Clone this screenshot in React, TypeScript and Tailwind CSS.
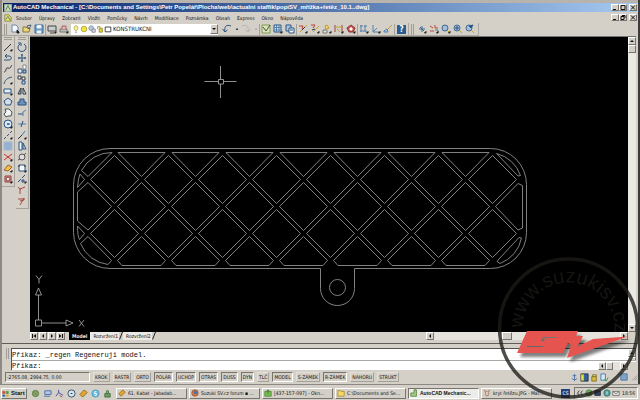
import type { ReactNode } from "react";

type Stroke = [d: string, color: string, fill?: string];

const navy = "#2b5280";
const ink = "#333840";
const red = "#b8403a";
const gold = "#c89a28";

function Glyph({ parts, className = "size-[10px]" }: { parts: Stroke[]; className?: string }) {
  return (
    <svg viewBox="0 0 10 10" className={`${className} shrink-0`} aria-hidden="true">
      {parts.map(([d, color, fill], i) => (
        <path key={i} d={d} stroke={color} fill={fill ?? "none"} strokeWidth="1" />
      ))}
    </svg>
  );
}

const corner: Stroke = ["M9 7.5V9H7.5Z", "#222", "#222"];
const lens: Stroke[] = [["M1 4a3 3 0 1 1 6 0a3 3 0 1 1-6 0Z", "#42688f", "#9fc0dc"], ["M6 6L9 9", gold]];

const icons: Record<string, Stroke[]> = {
  New: [["M2 1H6L8 3V8H2Z", "#6c88a5", "#f4f8fb"], ["M7 6L9 8V9H7Z", "#222", "#222"]],
  Open: [["M1 8V3H4L5 4H8L7 8Z", "#8b7a35", "#ecd278"], ["M5 2L9 1L7 5Z", "#456", "#e8eef2"]],
  Save: [["M1 1H9V9H1Z", "#3f6a99", "#6f9bc7"], ["M3 1.5H7V4H3Z", "#dce8f2", "#fff"], ["M3 7H7V9H3Z", "#e0e8f0", "#fff"]],
  Plot: [["M1 2H9V7H1Z", "#444", "#c9cdd0"], ["M3 9H7", "#444"], corner],
  Print: [["M1 5H8V8H1Z", "#777", "#bbb"], ["M3 5V2H7V5", "#a66", "#e9b3aa"], corner],
  Undo: [["M9 2C4 0 2 3 3 8M0.500 5L3 8L5.500 6", navy]],
  "Undo list": [["M4 5H6L5 6Z", "#345", "#345"]],
  Redo: [["M1 2C6 0 8 3 7 8M4.500 6L7 8L9.500 5", "#b5b5b5"]],
  "Redo list": [["M4 5H6L5 6Z", "#aaa", "#aaa"]],
  Sketch: [["M1 1V9H9V1Z", "#7f9c50", "#dce3bb"], ["M2 3L5 7L9 1", "#354"]],
  Table: [["M1 1H8V8H1Z", navy, "#d5e4f0"], ["M1 3.500H8M1 6H8M3.500 1V8M6 1V8", "#5480aa"], corner],
  List: [["M1 1H6V7H1Z", navy, "#aac9e2"], ["M4 4H9V9H4Z", navy, "#f2f6fa"], ["M5 6H8", navy]],
  "Edit part": [["M1 2H5L4 5", red], ["M2 8L6 4L9 1", gold], ["M4 6L7 3", ink], corner],
  "Power edit": [["M1 1H5L3 4", red], ["M3 8L9 2", gold], ["M2 6L5 5", ink], corner],
  Parts: [["M3 2L5 1L7 4L4 5Z", gold, "#f1d57b"], ["M1 6H5V9H1Z", "#777", "#ddd"], corner],
  Dimension: [["M1 1V8M8 1V8", "#944"], ["M1 3H8M3 5L6 8", gold], corner],
  Assembly: [["M1 4L5 1L9 4L7 8H3Z", "#8c2f2a", "#c9554d"], ["M4 4H6V6H4Z", "#fff", "#fff"], corner],
  Columns: [["M2 1V8M6 1V8M1 2H4M5 2H8M1 7H8", "#5480aa"], corner],
  Axis: [["M2 1V8H8M2 8L6 4", "#5480aa"], corner],
  Brush: [["M9 1L4 6", gold], ["M1 7L4 5L5 8H1Z", "#5480aa", "#b7cfe4"]],
  Pan: [["M2 5H8M5 2V8M3 3L7 7", "#42688f"], corner],
  "Zoom window": [["M1 2L4 4M1 7H5M6 1V4H9", "#b5483f"], ["M6 6H9V9", "#5b7fa3"], corner],
  "Zoom realtime": [...lens, corner],
  "Zoom extents": [...lens, ["M2 4H6M4 2V6", navy]],
  "Zoom previous": [...lens, ["M8 1L4 2L6 4Z", navy, navy]],
  Line: [["M1 9L8 2", ink], corner],
  Polyline: [["M1 7H6C9 7 9 3 6 3H2M4 1L2 3L4 5", navy]],
  Spline: [["M1 8C4 8 2 3 5 4S7 3 9 1", ink]],
  Arc: [["M1 9C2 5 4 3 9 2", navy], corner],
  Rectangle: [["M1 3H8V7H1Z", navy, "#e7f0f7"], corner],
  Polygon: [["M5 1L9 4L7.500 8H2.500L1 4Z", navy, "#d5dee6"]],
  Cloud: [["M2 1H6L9 4L8 8H5L3 9L1 6L3 4Z", "#455", "#f4f4f4"]],
  Circle: [["M1 5a4 4 0 1 1 8 0a4 4 0 1 1-8 0Z", navy, "#dce9f2"], ["M4 5H7M5 4V6", navy], corner],
  Centerline: [["M1 9L3 7M4 6L6 4M7 3L9 1", navy], corner],
  Hatch: [["M1 1H9V9H1Z", "#9db5d0", "#c8d6e6"], ["M1 3H9M1 5H9M1 7H9M3 1V9M5 1V9M7 1V9", "#86a5c8"]],
  Erase: [["M1 2L9 8M1 8L9 2", "#c8322f"], corner],
  Eraser: [["M1 7L5 2L9 4L5 8Z", "#a65f2a", "#ecc24a"], corner],
  Region: [["M2 2H8V8H2Z", "#9b3d3a", "#d9b8b2"], ["M3 5a2 2 0 1 1 4 0a2 2 0 1 1-4 0Z", "#833", "#eee"], corner],
  Rotate: [["M3 2A4 4 0 1 0 7 2M1 1H4V4", navy]],
  Move: [["M5 1V9M1 5H9M4 2H6M4 8H6M2 4V6M8 4V6", navy]],
  Copy: [["M1 5H5V9H1Z", "#456", "#dce9f2"], ["M6 1H9V5H6Z", "#888", "#fff"], ["M6 6H9V9H6Z", navy, "#98b7d2"]],
  Array: [["M1 1H4V4H1ZM5 2H8V5H5Z", ink, "#e9eef2"], ["M5 6H8V9H5Z", navy, "#c2d5e5"]],
  Mirror: [["M4 2V8H1Z", ink, "#98b7d2"], ["M6 2V8H9Z", ink, "#e4ecf2"]],
  Offset: [["M1 8V5H3V2H7V5H9V8Z", navy, "#6d94b8"]],
  Trim: [["M1 6H6", navy], ["M6 8V4L9 2", "#5480aa"]],
  Extend: [["M1 5H9", "#5480aa"], ["M4 8L6 2", navy]],
  Lengthen: [["M1 9L5 5", ink], ["M5 5L8 1", "#3c78b4"], corner],
  Chamfer: [["M2 1H5V9H2Z", navy, "#eef4f8"], ["M6 2L9 8H6Z", navy, "#d0dfea"]],
  Hole: [["M2 5a3 3 0 1 1 6 0a3 3 0 1 1-6 0Z", "#555", "#dedede"], ["M1 8L3 7M7 3L9 1", "#555"]],
  Stretch: [["M2 2H8V8H2Z", navy, "#f4f8fb"], ["M1 3H3M7 3H9", ink], corner],
  Break: [["M1 8L4 5M5 4L8 1", navy], ["M5 6H7V8H5Z", navy], corner],
  Fillet: [["M3 9V4L8 2M1 2L4 5", "#a54a40"]],
  "Fillet edge": [["M3 9L7 2M1 3H8M3 5L7 4", "#a54a40"]],
};

function Tool({ name }: { name: string }) {
  return (
    <button type="button" aria-label={name} className="flex h-[11px] w-[12px] shrink-0 items-center justify-center">
      <Glyph parts={icons[name]} />
    </button>
  );
}

function Separator() {
  return <span className="h-[11px] w-px shrink-0 bg-[#a5a29c]" />;
}

function Grip({ vertical = false }: { vertical?: boolean }) {
  return vertical ? (
    <span className="mx-[2px] my-px h-[3px] shrink-0 border-y border-[#a09d97]" />
  ) : (
    <span className="mx-[2px] h-[11px] w-[3px] shrink-0 border-x border-[#a09d97]" />
  );
}

const raised = "border border-t-white border-l-white border-r-[#77746f] border-b-[#77746f] bg-[#d4d0c8]";
const sunken = "border border-t-[#77746f] border-l-[#77746f] border-r-white border-b-white";

function Caption({ label, d }: { label: string; d: string }) {
  return (
    <button type="button" aria-label={label} className={`flex h-[7px] w-[8px] items-center justify-center ${raised}`}>
      <svg viewBox="0 0 6 5" className="h-[5px] w-[6px]" aria-hidden="true">
        <path d={d} stroke="#111" fill="none" strokeWidth="1" />
      </svg>
    </button>
  );
}

function Captions({ middle }: { middle: string }) {
  return (
    <div className="ml-auto flex shrink-0 items-center">
      <Caption label="Minimalizovat" d="M1 4.500H4" />
      <Caption label="Obnovit" d={middle} />
      <span className="w-[2px]" />
      <Caption label="Zavřít" d="M1 0.500L5 4.500M5 0.500L1 4.500" />
    </div>
  );
}

function Arrow({ label, d }: { label: string; d: string }) {
  return (
    <button type="button" aria-label={label} className={`flex size-[8px] shrink-0 items-center justify-center ${raised}`}>
      <svg viewBox="0 0 6 6" className="size-[6px]" aria-hidden="true">
        <path d={d} fill="#111" />
      </svg>
    </button>
  );
}

const left = "M4 1V5L2 3Z";
const right = "M2 1V5L4 3Z";
const up = "M1 4H5L3 2Z";
const down = "M1 2H5L3 4Z";

const menus = ["Soubor", "Úpravy", "Zobrazit", "Vložit", "Pomůcky", "Návrh", "Modifikace", "Poznámka", "Obsah", "Express", "Okno", "Nápověda"];

const layerIcons: Stroke[][] = [
  [["M5 1a2.500 2.500 0 0 1 2 4L6 7H4L3 5A2.500 2.500 0 0 1 5 1Z", "#b5a64c", "#fbf3a4"], ["M4 9H6", "#666"]],
  [["M1.500 5a3.500 3.500 0 1 1 7 0a3.500 3.500 0 1 1-7 0Z", "#a79a25", "#f1e443"]],
  [["M1 4a3 3 0 1 1 6 0a3 3 0 1 1-6 0Z", "#7890a5", "#bccbd6"], ["M5 5H9V9H5Z", "#778", "#dde"]],
  [["M2 5V2H5V4", "#968b2a"], ["M4 4H8V9H4Z", "#968b2a", "#d9cf3f"]],
  [["M1.500 2.500H8.500V8.500H1.500Z", "#222", "#fff"]],
];

function Toolbar() {
  return (
    <div className="flex h-[13px] shrink-0 items-center">
      <div className="flex h-[13px] items-center border-r border-b border-[#aaa7a1]">
        <Grip />
        {["New", "Open", "Save"].map((n) => <Tool key={n} name={n} />)}
        <Separator />
        {["Plot", "Print"].map((n) => <Tool key={n} name={n} />)}
        <label className="relative ml-px flex h-[11px] w-[147px] items-center bg-white">
          <span className="absolute left-px flex">
            {layerIcons.map((parts, i) => (
              <Glyph key={i} parts={parts} className="size-[8px]" />
            ))}
          </span>
          <select aria-label="Vrstva" className="h-[11px] w-full appearance-none bg-transparent pl-[42px] text-[6px] leading-[10px]">
            <option>KONSTRUKCNI</option>
          </select>
          <span className={`pointer-events-none absolute right-0 flex h-[10px] w-[8px] items-center justify-center ${raised}`}>
            <svg viewBox="0 0 6 6" className="size-[6px]" aria-hidden="true"><path d={down} fill="#111" /></svg>
          </span>
        </label>
        <span className="w-[3px]" />
        <Tool name="Undo" />
        <span className="flex w-[7px] justify-center"><Tool name="Undo list" /></span>
        <Tool name="Redo" />
        <span className="flex w-[7px] justify-center"><Tool name="Redo list" /></span>
        <Separator />
        {["Sketch", "Table", "List"].map((n) => <Tool key={n} name={n} />)}
        <Separator />
        {["Edit part", "Power edit", "Parts", "Dimension", "Assembly"].map((n) => <Tool key={n} name={n} />)}
        <Separator />
        {["Columns", "Axis", "Brush"].map((n) => <Tool key={n} name={n} />)}
        <Separator />
        <button type="button" aria-label="Help" className="mx-[2px] flex h-[9px] w-[9px] items-center justify-center bg-[#2c5c8f] text-[8px] leading-[9px] font-bold text-white">?</button>
      </div>
      <div className="flex h-[13px] items-center border-r border-b border-[#aaa7a1] pr-[2px]">
        <Grip />
        {["Pan", "Zoom window", "Zoom realtime", "Zoom extents", "Zoom previous"].map((n) => <Tool key={n} name={n} />)}
      </div>
    </div>
  );
}

const drawTools = ["Line", "Polyline", "Spline", "Arc", "Rectangle", "Polygon", "Cloud", "Circle", "Centerline", "Hatch", "Erase", "Eraser", "Region"];
const modifyTools = ["Rotate", "Move", "Copy", "Array", "Mirror", "Offset", "Trim", "Extend", "Lengthen", "Chamfer", "Hole", "Stretch", "Break", "Fillet", "Fillet edge"];

function SideBar({ tools }: { tools: string[] }) {
  return (
    <div className="flex flex-col self-start border-r border-b border-[#a5a29c] pb-[2px]">
      <Grip vertical />
      {tools.map((n) => <Tool key={n} name={n} />)}
    </div>
  );
}

const diamond = (x: number, y: number) => `M${x} ${y - 24}L${x + 24} ${y}L${x} ${y + 24}L${x - 24} ${y}Z`;
const steps = (n: number) => Array.from({ length: n }, (_, i) => i * 54);

const lattice = [
  ...steps(8).map((s) => diamond(114.5 + s, 179.5)),
  ...steps(7).map((s) => diamond(141.5 + s, 206.5)),
  ...steps(8).map((s) => diamond(114.5 + s, 233.5)),
  ...steps(7).map((s) => `M${118 + s} 152.500H${165 + s}L${141.5 + s} 176.500Z`),
  ...steps(7).map((s) => `M${141.5 + s} 236.500L${165.5 + s} 260.500L${161 + s} 265.500H${122 + s}L${117.5 + s} 260.500Z`),
  "M112 152.500L88 176.500L81.500 170.500A34 34 0 0 1 112 152.500Z",
  "M84.500 179.500L80 174Q78 179 77.500 187.500Z",
  "M88 182.500L111.500 206.500L88 230L77.500 221V192Z",
  "M84.500 233.500L77.500 226Q77.500 236 79.500 239.500Z",
  "M88 236.500L111.500 260.500L108 264.500A34 34 0 0 1 80.500 243.500Z",
  "M496.500 153.500L518 176L520.500 175.500A34 34 0 0 0 496.500 153.500Z",
  "M495.500 206.500L518 183.500L522.500 185.500V228L518 230Z",
  "M499 259L519 237.500L521.500 238A34 34 0 0 1 500 263.500L497 261.500Z",
].join("");

function Drawing() {
  return (
    <svg viewBox="30 37 598 295" preserveAspectRatio="xMinYMin slice" className="block h-full w-full" role="img" aria-label="Výkres">
      <g fill="none" stroke="#8e8e8e" strokeWidth="0.9">
        <path d="M110 148.500H490.500A36 36 0 0 1 526.500 184.500V232.500A36 36 0 0 1 490.500 268.500H354.500V288.500A17 17 0 0 1 320.500 288.500V268.500H110A36.500 36.500 0 0 1 73.500 232.500V184.500A36.500 36.500 0 0 1 110 148.500Z" />
        <circle cx="337.500" cy="287.500" r="8" />
        <path d={lattice} />
      </g>
      <g fill="none" stroke="#b4b4b4" strokeWidth="0.8">
        <path d="M204.500 81.500H218.500M223.500 81.500H236.500M220.500 66V79.500M220.500 84V98M218.500 79.500H223.500V84H218.500Z" />
        <path d="M35.500 320H41.500V326H35.500ZM38.500 320V295M41.500 323H66M35.500 295L38.500 288L41.500 295ZM66 320L73 323L66 326Z" />
        <path d="M36 275.500L39 279.500L42 275.500M39 279.500V283.500M79 320L84 326.500M84 320L79 326.500" />
      </g>
    </svg>
  );
}

const modes: [string, boolean][] = [
  ["KROK", false], ["RASTR", false], ["ORTO", false], ["POLÁR", true], ["UCHOP", true], ["OTRAS", true], ["DUSS", true],
  ["DYN", true], ["TLČ", false], ["MODEL", true], ["S-ZÁMEK", false], ["R-ZÁMEK", true], ["NAHORU", false], ["STRUKT", false],
];

const ball = "M1 5a4 4 0 1 1 8 0a4 4 0 1 1-8 0Z";
const quick: [string, Stroke[]][] = [
  ["Miranda", [["M1.500 5a3 3 0 1 1 7 0a3 3 0 1 1-7 0Z", "#58794a", "#7fa85f"], ["M4 4L6 6", "#c44"]]],
  ["Plocha", [["M2 2H9V6H2Z", "#4668a0", "#b8cce4"], ["M1 8H8", "#4668a0"]]],
  ["Acrobat", [["M4 1V4L1 8M4 4L9 7", "#3948a8"], ["M5 7L8 9", "#c33"]]],
  ["Přehrávač", [[ball, "#304c68", "#d5e4ee"], ["M4 5H6", "#222"]]],
  ["Winamp", [["M1 6L6 1L9 4L4 9Z", "#8c6a1d", "#e6a52e"]]],
  ["Skype", [[ball, "#4b9dc8", "#69bde4"], ["M6 3H4V5H6V7H4", "#fff"]]],
  ["Mapa", [["M2 5H8V9H2Z", "#487343", "#6c9a61"], ["M4 2H6V5H4Z", "#487343", "#a0bd8b"]]],
];

const tasks: [string, Stroke[]][] = [
  ["61. Kabat - Jabadab...", [["M1 6L6 1L9 4L4 9Z", "#8c6a1d", "#e6a52e"]]],
  ["Suzuki SV.cz forum ▪ ...", [[ball, "#a34b24", "#e1803a"], ["M4 3H7V6H4Z", "#456db0", "#456db0"]]],
  ["[437-157-097] - Okn...", [["M1 3H9V9H1Z", "#4b8a37", "#76bd52"], ["M5 1V6M3 3L5 1L7 3", "#3a722a"]]],
  ["C:\\Documents and Se...", [["M1 9V2H4L5 3H9V9Z", "#a8892d", "#f3d968"]]],
  ["AutoCAD Mechanic...", [["M1 9V5H5V1H8V9Z", "#477d38", "#a8cd8e"]]],
  ["kryt řetězu.JPG - Mal...", [["M2 1L5 9L8 1", "#9a5b2d"], ["M3 3H7V8H3Z", "#a88", "#dca"]]],
];

const statusIcons: Stroke[][] = [
  [["M5 1V9M3 3H7M2 6L5 8L8 6", "#4774a8"]],
  [["M1 1H9V9H1Z", "#234", "#315f9e"], ["M1.500 2H4V8H1.500Z", "#d6c829", "#ede04a"]],
  [["M3 4V2H7V4", "#7f6f20"], ["M2 4H7V9H2Z", "#7f6f20", "#d9bb3f"]],
  [["M1 1H6V8H1Z", "#4774a8", "#d9e7f1"], ["M5 7L7 9L9 5", "#2d984c"]],
];

const trayIcons: Stroke[][] = [
  [["M4 2L2 5L4 8M8 2L6 5L8 8", "#222"]],
  [[ball, "#4b7d42", "#72ad5f"], ["M5 5L8 8", "#c33"]],
  [["M1 2H8V8H1Z", "#222b3d", "#35445c"]],
  [[ball, "#34716c", "#4fa29a"], ["M5 3V7", "#fff"]],
  [["M1 3H9V8H1Z", "#666", "#eee"], ["M1 3L5 6L9 3", "#666"]],
];

function Watermark() {
  const mark = (
    <path
      fillRule="evenodd"
      d="M527 331H578L576 336H583L577 347L593 339L628 336.500L567 358L571 345L568 343L563 353H517L522 342ZM541 341L543 337H557L556 338H545L544 341ZM527 346H544L543 347H526Z"
    />
  );
  return (
    <svg viewBox="498 256 142 144" className="pointer-events-none absolute right-0 bottom-0 h-[144px] w-[142px]" aria-hidden="true">
      <defs>
        <path id="ring" d="M522.500 328.500A46 46 0 0 1 614.500 328.500V336" />
        <filter id="shade" x="-10%" y="-20%" width="120%" height="150%">
          <feGaussianBlur stdDeviation="1.500" />
        </filter>
      </defs>
      <circle cx="568.500" cy="328" r="69" fill="none" stroke="#1c1b17" strokeOpacity="0.78" strokeWidth="3.500" />
      <text className="font-['Liberation_Sans',sans-serif] text-[20px]" fill="#1c1b17" fillOpacity="0.78">
        <textPath href="#ring">www.suzukisv.cz</textPath>
      </text>
      <g transform="translate(3 4)" fill="#000" opacity="0.5" filter="url(#shade)">{mark}</g>
      <g fill="#e65450">{mark}</g>
    </svg>
  );
}

function Slant() {
  return (
    <svg viewBox="0 0 4 8" className="h-[8px] w-[4px] shrink-0" aria-hidden="true">
      <path d="M0.500 7.500L3.500 0" stroke="#222" strokeWidth="1" />
    </svg>
  );
}

function Panel({ children, className }: { children: ReactNode; className: string }) {
  return <div className={`flex shrink-0 items-center ${className}`}>{children}</div>;
}

export default function App() {
  return (
    <div className="relative flex h-screen flex-col overflow-hidden bg-[#d4d0c8] font-['DejaVu_Sans_Condensed','DejaVu_Sans',sans-serif] text-[5px] leading-[8px] whitespace-nowrap text-[#111]">
      <div className="flex min-h-0 flex-1 flex-col border-r-2 border-l-2 border-r-[#3c3b39] border-l-[#8d8a86]">
        <div className="h-[3px] shrink-0 bg-[#b9b3ae]" />
        <header className="mx-px flex h-[9px] shrink-0 items-center bg-linear-to-r from-[#0a246a] to-[#a6caf0] pl-px text-white">
          <Glyph parts={[["M0.500 0.500H9.500V9.500H0.500Z", "#9fb59a", "#c9d7bf"], ["M2 8L5 2L8 8", "#3f7a3c"]]} className="size-[8px]" />
          <h1 className="ml-px font-['Liberation_Sans',sans-serif] text-[6px] leading-[9px] font-bold">
            AutoCAD Mechanical - [C:\Documents and Settings\Petr Popelář\Plocha\web\actualni staffík\popiSV_mřížka+řetěz_10.1..dwg]
          </h1>
          <Captions middle="M1 0.500H5V4.500H1Z" />
        </header>
        <nav className="mx-px flex h-[11px] shrink-0 items-center pl-px">
          <Glyph parts={[["M1 1H6L9 4V9H1Z", "#76884f", "#eee05f"], ["M2 7L5 3L8 8", "#39669a"]]} className="size-[8px]" />
          <div className="ml-[4px] flex gap-[7px]">
            {menus.map((m) => <button type="button" key={m}>{m}</button>)}
          </div>
          <Captions middle="M2 0.500H5V3M1 1.500H4V4.500H1Z" />
        </nav>
        <Toolbar />

        <main className="flex min-h-0 flex-1">
          <aside className="flex w-[28px] shrink-0 gap-px">
            <SideBar tools={drawTools} />
            <SideBar tools={modifyTools} />
          </aside>
          <section className="flex min-w-0 flex-1 flex-col border-t border-[#77746f]">
            <div className="flex min-h-0 flex-1">
              <div className="min-w-0 flex-1 bg-black"><Drawing /></div>
              <div className="flex w-[8px] shrink-0 flex-col bg-[#ebe9e4]">
                <Arrow label="Nahoru" d={up} />
                <span className={`h-[8px] ${raised}`} />
                <span className="flex-1" />
                <Arrow label="Dolů" d={down} />
              </div>
            </div>
            <Panel className="h-[8px]">
              <span className="flex gap-px">
                <Arrow label="První" d="M1 1H2V5H1ZM5 1V5L2.500 3Z" />
                <Arrow label="Předchozí" d={left} />
                <Arrow label="Další" d={right} />
                <Arrow label="Poslední" d="M4 1H5V5H4ZM1 1V5L3.500 3Z" />
              </span>
              <span className="w-[4px]" />
              <button type="button" className="h-[8px] bg-black px-[3px] font-bold text-[#e8e8e8]">Model</button>
              <button type="button" className="h-[8px] bg-[#eceae5] pr-px pl-[3px]">Rozvržení1</button>
              <Slant />
              <button type="button" className="h-[8px] bg-[#eceae5] pr-px pl-[3px]">Rozvržení2</button>
              <Slant />
              <span className="ml-auto flex w-[202px] bg-[#e6e3dd]">
                <Arrow label="Doleva" d={left} />
                <span className="w-[68px]" />
                <span className={`h-[8px] w-[10px] ${raised}`} />
                <span className="flex-1" />
                <Arrow label="Doprava" d={right} />
              </span>
              <span className="w-[8px]" />
            </Panel>
          </section>
          <span className="w-[2px] shrink-0" />
        </main>

        <div className="mt-[3px] h-px shrink-0 bg-[#5f5d59]" />
        <section className="mt-[4px] flex h-[22px] shrink-0 pl-[2px]">
          <Grip />
          <div className="flex min-w-0 flex-1 flex-col border-t border-l border-[#55534f] bg-white font-['Liberation_Mono',monospace] text-[7px]">
            <div className="flex h-[12px] items-center border-b border-[#aaa8a4]">
              <output>Příkaz: _regen Regeneruji model.</output>
              <span className="ml-auto flex h-[11px] w-[8px] flex-col overflow-hidden bg-[#e6e3dd]">
                <Arrow label="Historie nahoru" d={up} />
                <Arrow label="Historie dolů" d={down} />
              </span>
            </div>
            <label className="flex flex-1 items-center">
              Příkaz:
              <input aria-label="Příkaz" className="h-[8px] min-w-0 flex-1 outline-none" />
              <Arrow label="Text doleva" d={left} />
              <span className={`h-[8px] w-[7px] ${raised}`} />
              <span className="h-[8px] w-[7px] bg-[#e6e3dd]" />
              <Arrow label="Text doprava" d={right} />
              <span className="h-[8px] w-[8px] bg-[#d4d0c8]" />
            </label>
          </div>
          <span className="w-[2px]" />
        </section>

        <footer className="flex h-[14px] shrink-0 items-center gap-[3px] pl-[3px]">
          <span className={`h-[10px] w-[85px] px-px ${sunken}`}>-2765.08, 2994.75, 0.00</span>
          {modes.map(([m, on]) => (
            <button type="button" key={m} aria-pressed={on} className={`h-[10px] px-px leading-[8px] ${on ? sunken : "border border-t-[#e4e1db] border-l-[#e4e1db] border-r-[#a5a29c] border-b-[#a5a29c]"}`}>
              {m}
            </button>
          ))}
          <span className="mr-[8px] ml-auto flex gap-px">
            {statusIcons.map((p, i) => <Glyph key={i} parts={p} className="size-[9px]" />)}
          </span>
          <Glyph parts={[["M1 1H9V9H1Z", "#47719d", "#7fa3c6"]]} className="size-[8px]" />
          <Glyph parts={[["M2 9L9 2M5 9L9 5M8 9L9 8", "#8b8882"]]} className="size-[7px]" />
        </footer>
      </div>

      <footer className="flex h-[16px] shrink-0 items-center border-t border-[#8c8984] pt-px pl-px">
        <button type="button" className={`flex h-[11px] w-[26px] items-center gap-[2px] font-['Liberation_Sans',sans-serif] text-[6px] font-bold ${raised}`}>
          <Glyph parts={[["M1 2H4V5H1Z", "#d24a35", "#d24a35"], ["M6 2H9V5H6Z", "#4a9a45", "#4a9a45"], ["M1 7H4V9H1Z", "#3a68b2", "#3a68b2"], ["M6 7H9V9H6Z", "#ddb12d", "#ddb12d"]]} className="size-[7px]" />
          Start
        </button>
        <div className="ml-[2px] flex">
          {quick.map(([n, p]) => (
            <button type="button" key={n} aria-label={n} className="flex w-[12px] justify-center"><Glyph parts={p} className="size-[9px]" /></button>
          ))}
        </div>
        <div className="ml-[3px] flex min-w-0 flex-1 gap-[2px]">
          {tasks.map(([n, p], i) => (
            <button type="button" key={n} className={`flex h-[11px] w-[71px] items-center gap-[2px] pl-px ${i === 4 ? `bg-[#eeece8] font-['Liberation_Sans',sans-serif] font-bold ${sunken}` : raised}`}>
              <Glyph parts={p} className="size-[8px]" />
              {n}
            </button>
          ))}
        </div>
        <span className="mr-[4px] h-[9px] w-[9px] bg-[#24437e] text-center leading-[9px] text-white">CS</span>
        <div className={`mr-[2px] flex h-[12px] items-center gap-px px-px ${sunken}`}>
          {trayIcons.map((p, i) => <Glyph key={i} parts={p} className="size-[8px]" />)}
          <time className="mx-px">18:56</time>
        </div>
      </footer>
      <Watermark />
    </div>
  );
}
